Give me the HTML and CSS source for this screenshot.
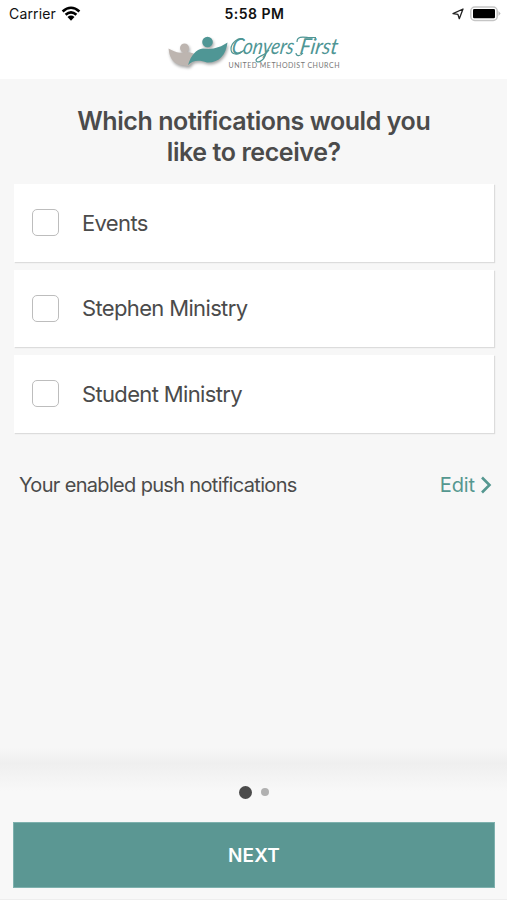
FILE: index.html
```html
<!DOCTYPE html>
<html lang="en">
<head>
<meta charset="utf-8">
<title>Notifications</title>
<link rel="stylesheet" href="styles.css">
</head>
<body>
<header class="header">
  <div class="status">
    <div class="status-left"><span class="carrier">Carrier</span>
      <svg class="wifi" width="20" height="16" viewBox="0 0 20 16"><g fill="none" stroke="#000" stroke-width="2.6"><path d="M1.6 5.5Q10-2 18.400 5.500"/><path d="M4.600 8.700Q10 4 15.400 8.700"/></g><path d="M6.500 10.900Q10 8 13.500 10.900L10 14.700Z"/></svg>
    </div>
    <span class="time">5:58 PM</span>
    <div class="status-right">
      <svg width="12" height="12" viewBox="0 0 12 12"><path d="M11 1L7.300 10.700L5.900 6.400L1 5.700Z" fill="none" stroke="#222" stroke-width="1.300" stroke-linejoin="round"/></svg>
      <svg width="31" height="16" viewBox="0 0 31 16"><rect x=".8" y="1" width="26.400" height="13.400" rx="4" fill="#fff" stroke="#c5c5c5" stroke-width="1.500"/><rect x="3" y="3" width="22" height="9.300" rx="1.300"/><path d="M28.500 5L30.600 7.500L28.500 10Z" fill="#bbb"/></svg>
    </div>
  </div>
  <svg class="logo" width="190" height="50" viewBox="0 0 190 50">
    <g class="mark">
      <circle cx="24.500" cy="20" r="4.500" fill="#bdb5b0"/>
      <path d="M8.500 20.500C10 35 18 38 29 38L38 28C33 24.500 29 24 25 24C17 26 14 23 8.500 20.500Z" fill="#bdb5b0"/>
      <circle cx="47.500" cy="14" r="5.300" fill="#4f9695"/>
      <path d="M28 37C31 27 36 21.500 43 20.500C53 22 61 19 67.500 14.500C66 27 59 35 47 34.500C39 31.500 33 32 28 37Z" fill="#4f9695"/>
    </g>
    <text class="logo-script" transform="translate(71 26) skewX(-9)" textLength="62" lengthAdjust="spacingAndGlyphs">Conyers</text>
    <text class="logo-script" transform="translate(139 26) skewX(-9)" textLength="38" lengthAdjust="spacingAndGlyphs">First</text>
    <path class="swash" d="M84 12C79 8 71 15 71 21C71 27 78 28 84 22M106 25C104 34 96 36 96 32C97 28 105 28 109 22M137 14C137 8 143 9 148 9.500H156M143 25C140 29 136 28 136 25"/>
    <text class="logo-caption" x="68.500" y="39.500" textLength="111">UNITED METHODIST CHURCH</text>
  </svg>
</header>
<main class="content">
  <h1>Which notifications would you<br>like to receive?</h1>
  <div class="options">
    <label class="option"><input type="checkbox"><span>Events</span></label>
    <label class="option"><input type="checkbox"><span>Stephen Ministry</span></label>
    <label class="option"><input type="checkbox"><span>Student Ministry</span></label>
  </div>
  <div class="enabled"><span class="summary">Your enabled push notifications</span>
    <a class="edit"><span>Edit</span><svg width="12" height="18" viewBox="0 0 12 18"><path d="M2 1.500L9.500 9L2 16.500" fill="none" stroke="#559790" stroke-width="2.600"/></svg></a>
  </div>
</main>
<footer class="footer">
  <div class="dots"><i class="dot active"></i><i class="dot"></i></div>
  <button class="next">NEXT</button>
</footer>
</body>
</html>
```
FILE: styles.css
```css
* { box-sizing: border-box; }
body {
  margin: 0;
  height: 900px;
  display: flex;
  flex-direction: column;
  overflow: hidden;
  background: #f7f7f7;
  color: #4b4b4b;
  font-family: Inter, "Liberation Sans", sans-serif;
}
.header { height: 79px; background: #fff; display: flex; flex-direction: column; align-items: center; }
.status { width: 100%; height: 28px; padding: 0 6px 0 9px; display: grid; grid-template-columns: 1fr auto 1fr; align-items: center; color: #111; font-size: 14px; line-height: 28px; }
.status-left, .status-right { display: flex; align-items: center; }
.status-left { gap: 5px; }
.status-right { justify-content: flex-end; gap: 6px; }
.carrier { letter-spacing: .15px; }
.wifi { margin-top: -1px; }
.time { font-weight: 600; letter-spacing: .5px; margin-right: 1px; }
.logo { display: block; margin-left: 3px; }
.mark { filter: drop-shadow(1px 2px 1.5px rgba(0, 0, 0, .35)); }
.logo-script { font: italic 400 22px Lato, sans-serif; fill: #4f9695; }
.swash { fill: none; stroke: #4f9695; stroke-width: 1.2; }
.logo-caption { font: 400 7px Lato, sans-serif; fill: #777; }
.content { flex: 1; padding: 27px 13.5px 0 14px; background: linear-gradient(#f7f7f7 668px, #efefef 684px); }
h1 { margin: 0 0 16px; text-align: center; font-size: 25px; line-height: 31px; font-weight: 600; letter-spacing: -.42px; }
.options { display: flex; flex-direction: column; gap: 8px; }
.option { height: 77.5px; padding-left: 18px; display: flex; align-items: center; gap: 23px; background: #fff; box-shadow: 1px 1px 1px 0 #dcdcdc; font-size: 22px; letter-spacing: -.65px; }
input { appearance: none; width: 27px; height: 27px; margin: 0; border: 1.5px solid #bdbdbd; border-radius: 5px; background: #fff; }
.enabled { height: 28px; margin-top: 38px; padding: 0 1.5px 0 5px; display: flex; justify-content: space-between; align-items: center; font-size: 20px; }
.summary { letter-spacing: -.67px; }
.edit { display: flex; align-items: center; gap: 5px; color: #559790; letter-spacing: -.1px; }
.footer { height: 137px; padding: 22px 12px 0 13px; background: linear-gradient(#efefef, #f8f8f8 28px); border-bottom: 1px solid #eee; }
.dots { height: 14px; display: flex; justify-content: center; align-items: center; gap: 9px; margin-bottom: 23px; }
.dot { width: 8px; height: 8px; border-radius: 50%; background: #b1b1b1; }
.dot.active { width: 13px; height: 13px; background: #4b4b4b; }
.next { display: block; width: 100%; height: 66px; border: 1px solid #7eb1ae; background: #5b9793; color: #fff; font: 600 19px Inter, sans-serif; letter-spacing: .2px; }
```
